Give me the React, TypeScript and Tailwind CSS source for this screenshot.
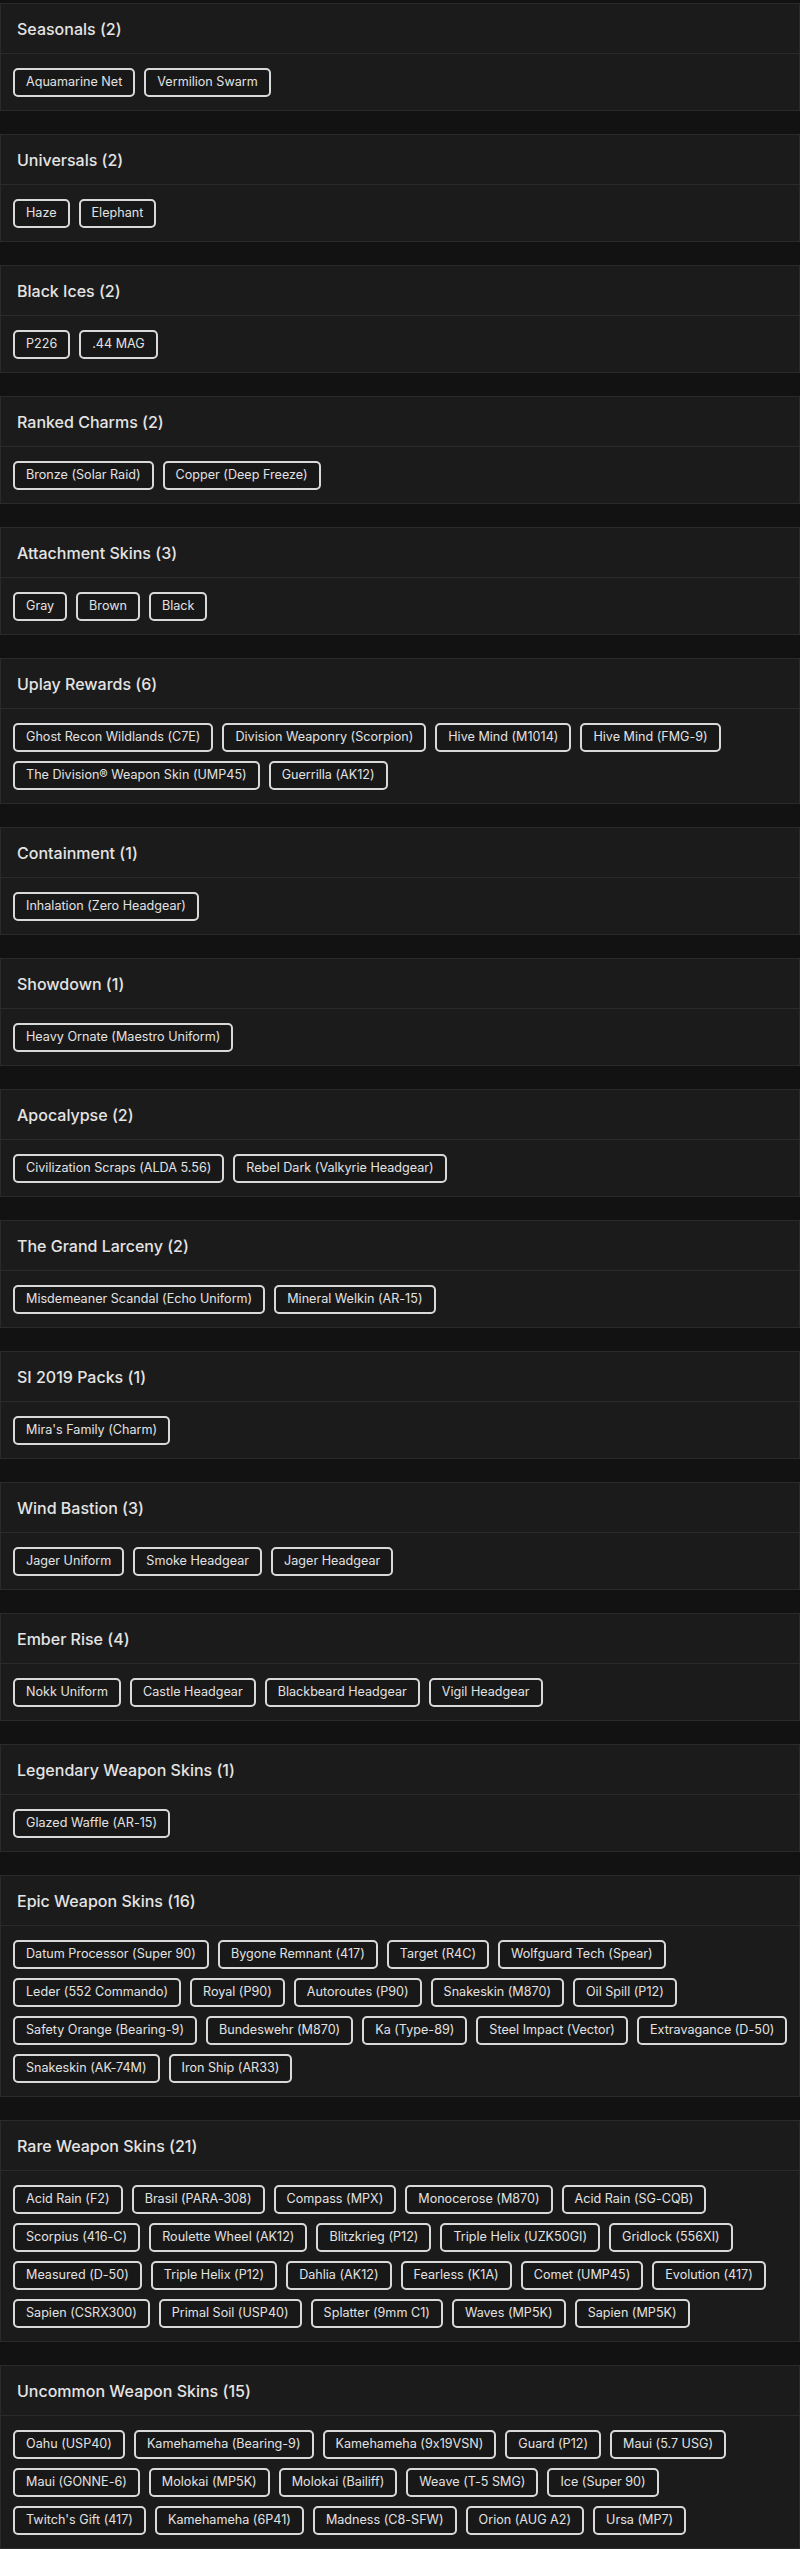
import React from "react";

type Section = { title: string; items: string[] };

const sections: Section[] = [
  { title: "Seasonals", items: ["Aquamarine Net", "Vermilion Swarm"] },
  { title: "Universals", items: ["Haze", "Elephant"] },
  { title: "Black Ices", items: ["P226", ".44 MAG"] },
  { title: "Ranked Charms", items: ["Bronze (Solar Raid)", "Copper (Deep Freeze)"] },
  { title: "Attachment Skins", items: ["Gray", "Brown", "Black"] },
  {
    title: "Uplay Rewards",
    items: [
      "Ghost Recon Wildlands (C7E)",
      "Division Weaponry (Scorpion)",
      "Hive Mind (M1014)",
      "Hive Mind (FMG-9)",
      "The Division® Weapon Skin (UMP45)",
      "Guerrilla (AK12)",
    ],
  },
  { title: "Containment", items: ["Inhalation (Zero Headgear)"] },
  { title: "Showdown", items: ["Heavy Ornate (Maestro Uniform)"] },
  { title: "Apocalypse", items: ["Civilization Scraps (ALDA 5.56)", "Rebel Dark (Valkyrie Headgear)"] },
  { title: "The Grand Larceny", items: ["Misdemeaner Scandal (Echo Uniform)", "Mineral Welkin (AR-15)"] },
  { title: "SI 2019 Packs", items: ["Mira's Family (Charm)"] },
  { title: "Wind Bastion", items: ["Jager Uniform", "Smoke Headgear", "Jager Headgear"] },
  { title: "Ember Rise", items: ["Nokk Uniform", "Castle Headgear", "Blackbeard Headgear", "Vigil Headgear"] },
  { title: "Legendary Weapon Skins", items: ["Glazed Waffle (AR-15)"] },
  {
    title: "Epic Weapon Skins",
    items: [
      "Datum Processor (Super 90)",
      "Bygone Remnant (417)",
      "Target (R4C)",
      "Wolfguard Tech (Spear)",
      "Leder (552 Commando)",
      "Royal (P90)",
      "Autoroutes (P90)",
      "Snakeskin (M870)",
      "Oil Spill (P12)",
      "Safety Orange (Bearing-9)",
      "Bundeswehr (M870)",
      "Ka (Type-89)",
      "Steel Impact (Vector)",
      "Extravagance (D-50)",
      "Snakeskin (AK-74M)",
      "Iron Ship (AR33)",
    ],
  },
  {
    title: "Rare Weapon Skins",
    items: [
      "Acid Rain (F2)",
      "Brasil (PARA-308)",
      "Compass (MPX)",
      "Monocerose (M870)",
      "Acid Rain (SG-CQB)",
      "Scorpius (416-C)",
      "Roulette Wheel (AK12)",
      "Blitzkrieg (P12)",
      "Triple Helix (UZK50GI)",
      "Gridlock (556XI)",
      "Measured (D-50)",
      "Triple Helix (P12)",
      "Dahlia (AK12)",
      "Fearless (K1A)",
      "Comet (UMP45)",
      "Evolution (417)",
      "Sapien (CSRX300)",
      "Primal Soil (USP40)",
      "Splatter (9mm C1)",
      "Waves (MP5K)",
      "Sapien (MP5K)",
    ],
  },
  {
    title: "Uncommon Weapon Skins",
    items: [
      "Oahu (USP40)",
      "Kamehameha (Bearing-9)",
      "Kamehameha (9x19VSN)",
      "Guard (P12)",
      "Maui (5.7 USG)",
      "Maui (GONNE-6)",
      "Molokai (MP5K)",
      "Molokai (Bailiff)",
      "Weave (T-5 SMG)",
      "Ice (Super 90)",
      "Twitch's Gift (417)",
      "Kamehameha (6P41)",
      "Madness (C8-SFW)",
      "Orion (AUG A2)",
      "Ursa (MP7)",
    ],
  },
];

function Card({ s }: { s: Section }) {
  return (
    <div className="shrink-0 bg-[#1b1b1b] border border-[#2a2a2a]">
      <div className="h-[50px] flex items-center px-4 border-b border-[#2a2a2a]">
        <h2 className="text-[16px] font-medium text-[#e4e4e4] leading-none">
          {s.title} ({s.items.length})
        </h2>
      </div>
      <div className="flex flex-wrap gap-[9px] pl-[12px] pr-[3px] pt-[14px] pb-[13px]">
        {s.items.map((it) => (
          <span
            key={it}
            className="h-[29px] flex items-center px-[11px] border-2 border-[#d9d9d9] rounded-[5px] bg-[#181818] text-[12.6px] text-[#e2e2e2] leading-none whitespace-nowrap"
          >
            {it}
          </span>
        ))}
      </div>
    </div>
  );
}

export default function App() {
  return (
    <div className="h-screen overflow-hidden bg-[#121212] pt-[3px] flex flex-col gap-[23px] font-[Inter,Noto_Sans,sans-serif] [font-feature-settings:'calt'_0]">
      {sections.map((s) => (
        <Card key={s.title} s={s} />
      ))}
    </div>
  );
}
